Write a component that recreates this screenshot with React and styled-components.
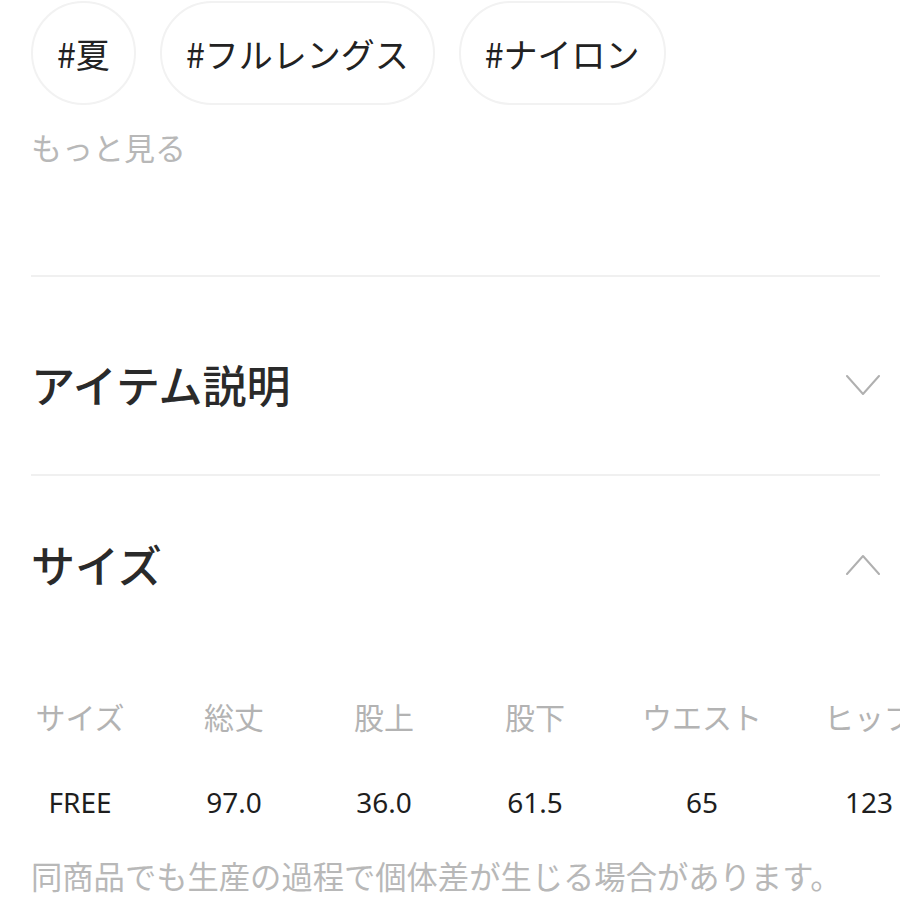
import React from "react";
import styled, { createGlobalStyle } from "styled-components";

const Global = createGlobalStyle`
  html, body { margin: 0; padding: 0; background: #fff; }
  body {
    font-family: "Noto Sans", "Noto Sans CJK JP", sans-serif;
    overflow: hidden;
  }
`;

const Page = styled.div`
  width: 900px;
  height: 900px;
  overflow: hidden;
  background: #fff;
`;

const Inner = styled.div`
  padding: 0 20px 0 31px;
`;

const TagRow = styled.div`
  display: flex;
  gap: 24px;
  padding-top: 1px;
`;

const Tag = styled.div`
  height: 104px;
  box-sizing: border-box;
  padding: 0 24px;
  border: 2px solid #f2f2f2;
  border-radius: 52px;
  display: flex;
  align-items: center;
  font-size: 34px;
  color: #222;
  font-family: "Noto Sans CJK JP", sans-serif;
`;

const More = styled.div`
  margin-top: 22px;
  font-size: 31px;
  line-height: 40px;
  color: #b8b8b8;
  font-family: "Noto Sans CJK JP", sans-serif;
`;

const Divider = styled.div`
  height: 2px;
  background: #f0f0f0;
  margin-top: ${(p) => p.$top || 0}px;
`;

const SectionHeader = styled.div`
  display: flex;
  align-items: center;
  justify-content: space-between;
  height: ${(p) => p.$h}px;
  padding-top: ${(p) => p.$pt || 0}px;
  box-sizing: border-box;
`;

const SectionTitle = styled.h2`
  margin: 0;
  font-size: 44px;
  font-weight: 500;
  color: #2a2a2a;
  font-family: "Noto Sans CJK JP", sans-serif;
`;

const ChevronWrap = styled.span`
  display: flex;
  margin-top: ${(p) => p.$mt || 0}px;
`;

const SizeTable = styled.div`
  display: grid;
  grid-template-columns: 160px 148px 152px 150px 184px 150px;
  width: 944px;
  margin-top: 44px;
`;

const HeadCell = styled.div`
  text-align: center;
  white-space: nowrap;
  font-size: 30px;
  line-height: 40px;
  color: #b3b3b3;
  font-family: "Noto Sans CJK JP", sans-serif;
  padding-bottom: 46px;
`;

const ValueCell = styled.div`
  text-align: center;
  white-space: nowrap;
  font-size: 28px;
  line-height: 40px;
  color: #1e1e1e;
  font-family: "Noto Sans", sans-serif;
`;

const Note = styled.p`
  margin: 32px 0 0;
  font-size: 31.3px;
  line-height: 44px;
  color: #b8b8b8;
  white-space: nowrap;
  font-family: "Noto Sans CJK JP", sans-serif;
`;

const Chevron = ({ up }) => (
  <svg width="34" height="21" viewBox="0 0 34 21" fill="none">
    <path
      d={up ? "M1 20 L17 2 L33 20" : "M1 1 L17 19 L33 1"}
      stroke="#b0b0b0"
      strokeWidth="2"
      strokeLinecap="round"
      strokeLinejoin="round"
    />
  </svg>
);

const heads = ["サイズ", "総丈", "股上", "股下", "ウエスト", "ヒップ"];
const values = ["FREE", "97.0", "36.0", "61.5", "65", "123"];

export default function App() {
  return (
    <Page>
      <Global />
      <Inner>
        <TagRow>
          <Tag>#夏</Tag>
          <Tag>#フルレングス</Tag>
          <Tag>#ナイロン</Tag>
        </TagRow>
        <More>もっと見る</More>
        <Divider $top={108} />
        <SectionHeader $h={197} $pt={16}>
          <SectionTitle>アイテム説明</SectionTitle>
          <ChevronWrap $mt={4}>
            <Chevron />
          </ChevronWrap>
        </SectionHeader>
        <Divider />
        <SectionHeader $h={176}>
          <SectionTitle>サイズ</SectionTitle>
          <ChevronWrap>
            <Chevron up />
          </ChevronWrap>
        </SectionHeader>
      </Inner>
      <SizeTable>
        {heads.map((h) => (
          <HeadCell key={h}>{h}</HeadCell>
        ))}
        {values.map((v) => (
          <ValueCell key={v}>{v}</ValueCell>
        ))}
      </SizeTable>
      <Inner>
        <Note>同商品でも生産の過程で個体差が生じる場合があります。</Note>
      </Inner>
    </Page>
  );
}
